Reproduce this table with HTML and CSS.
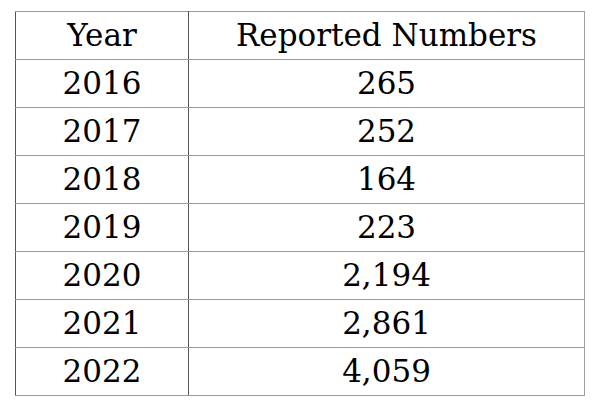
FILE: index.html
```html
<!DOCTYPE html>
<html>
<head>
<meta charset="utf-8">
<link rel="stylesheet" href="styles.css">
</head>
<body>
<div class="page">
<table class="data">
<thead>
<tr><th class="c-year">Year</th><th class="c-num">Reported Numbers</th></tr>
</thead>
<tbody>
<tr><td>2016</td><td>265</td></tr>
<tr><td>2017</td><td>252</td></tr>
<tr><td>2018</td><td>164</td></tr>
<tr><td>2019</td><td>223</td></tr>
<tr><td>2020</td><td>2,194</td></tr>
<tr><td>2021</td><td>2,861</td></tr>
<tr><td>2022</td><td>4,059</td></tr>
</tbody>
</table>
</div>
</body>
</html>
```
FILE: styles.css
```css
html, body {
  margin: 0;
  padding: 0;
  background: #fff;
}
.page {
  padding: 11px 0 0 15px;
}
.data {
  border-collapse: collapse;
  width: 570px;
  table-layout: fixed;
  font-family: "DejaVu Serif", "Liberation Serif", serif;
  color: #000;
}
.data th, .data td {
  border-top: 1px solid #9a9a9a;
  border-bottom: 1px solid #9a9a9a;
  border-left: 1px solid #555;
  border-right: 1px solid #555;
  height: 47px;
  padding: 0;
  text-align: center;
  vertical-align: middle;
  font-weight: normal;
  font-size: 31px;
  line-height: 1;
}
.data th:last-child, .data td:last-child {
  border-right-color: #a0a0a0;
}
.c-year {
  width: 172px;
}
```
